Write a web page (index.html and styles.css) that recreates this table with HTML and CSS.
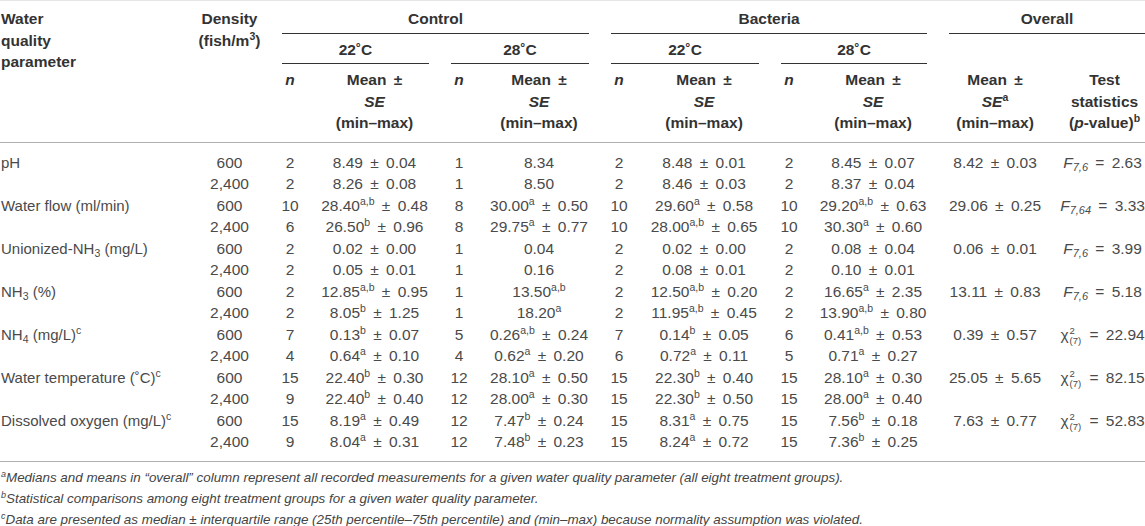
FILE: index.html
```html
<!DOCTYPE html>
<html lang="en">
<head>
<meta charset="utf-8">
<title>Water quality parameters</title>
<link rel="stylesheet" href="styles.css">
</head>
<body>
<table class="tbl">
  <colgroup>
    <col class="c-param"><col class="c-dens">
    <col class="c-n"><col class="c-m1">
    <col class="c-n"><col class="c-m2">
    <col class="c-n"><col class="c-m3">
    <col class="c-n"><col class="c-m4">
    <col class="c-om"><col class="c-test">
  </colgroup>
  <thead>
    <tr>
      <th rowspan="3" class="h-param">Water<br>quality<br>parameter</th>
      <th rowspan="3" class="h-dens">Density<br>(fish/m<sup>3</sup>)</th>
      <th colspan="4" class="grp"><div class="lbl1">Control</div></th>
      <th colspan="4" class="grp"><div class="lbl1">Bacteria</div></th>
      <th colspan="2" class="grp grp-last"><div class="lbl1">Overall</div></th>
    </tr>
    <tr>
      <th colspan="2" class="grp"><div class="lbl2">22˚C</div></th>
      <th colspan="2" class="grp"><div class="lbl2">28˚C</div></th>
      <th colspan="2" class="grp"><div class="lbl2">22˚C</div></th>
      <th colspan="2" class="grp"><div class="lbl2">28˚C</div></th>
      <th colspan="2" class="empty"></th>
    </tr>
    <tr>
      <th class="h3"><i>n</i></th><th class="h3">Mean ±<br><i>SE</i><br>(min–max)</th>
      <th class="h3"><i>n</i></th><th class="h3">Mean ±<br><i>SE</i><br>(min–max)</th>
      <th class="h3"><i>n</i></th><th class="h3">Mean ±<br><i>SE</i><br>(min–max)</th>
      <th class="h3"><i>n</i></th><th class="h3">Mean ±<br><i>SE</i><br>(min–max)</th>
      <th class="h3">Mean ±<br><i>SE</i><sup>a</sup><br>(min–max)</th>
      <th class="h3 test">Test<br>statistics<br>(<i>p</i>-value)<sup>b</sup></th>
    </tr>
  </thead>
  <tbody>
    <tr><td class="param">pH</td><td>600</td><td>2</td><td>8.49 ± 0.04</td><td>1</td><td>8.34</td><td>2</td><td>8.48 ± 0.01</td><td>2</td><td>8.45 ± 0.07</td><td>8.42 ± 0.03</td><td class="test"><i>F</i><sub class="fs">7,6</sub> = 2.63</td></tr>
    <tr><td class="param"></td><td>2,400</td><td>2</td><td>8.26 ± 0.08</td><td>1</td><td>8.50</td><td>2</td><td>8.46 ± 0.03</td><td>2</td><td>8.37 ± 0.04</td><td></td><td class="test"></td></tr>
    <tr><td class="param">Water flow (ml/min)</td><td>600</td><td>10</td><td>28.40<sup>a,b</sup> ± 0.48</td><td>8</td><td>30.00<sup>a</sup> ± 0.50</td><td>10</td><td>29.60<sup>a</sup> ± 0.58</td><td>10</td><td>29.20<sup>a,b</sup> ± 0.63</td><td>29.06 ± 0.25</td><td class="test"><i>F</i><sub class="fs">7,64</sub> = 3.33</td></tr>
    <tr><td class="param"></td><td>2,400</td><td>6</td><td>26.50<sup>b</sup> ± 0.96</td><td>8</td><td>29.75<sup>a</sup> ± 0.77</td><td>10</td><td>28.00<sup>a,b</sup> ± 0.65</td><td>10</td><td>30.30<sup>a</sup> ± 0.60</td><td></td><td class="test"></td></tr>
    <tr><td class="param">Unionized-NH<sub>3</sub> (mg/L)</td><td>600</td><td>2</td><td>0.02 ± 0.00</td><td>1</td><td>0.04</td><td>2</td><td>0.02 ± 0.00</td><td>2</td><td>0.08 ± 0.04</td><td>0.06 ± 0.01</td><td class="test"><i>F</i><sub class="fs">7,6</sub> = 3.99</td></tr>
    <tr><td class="param"></td><td>2,400</td><td>2</td><td>0.05 ± 0.01</td><td>1</td><td>0.16</td><td>2</td><td>0.08 ± 0.01</td><td>2</td><td>0.10 ± 0.01</td><td></td><td class="test"></td></tr>
    <tr><td class="param">NH<sub>3</sub> (%)</td><td>600</td><td>2</td><td>12.85<sup>a,b</sup> ± 0.95</td><td>1</td><td>13.50<sup>a,b</sup></td><td>2</td><td>12.50<sup>a,b</sup> ± 0.20</td><td>2</td><td>16.65<sup>a</sup> ± 2.35</td><td>13.11 ± 0.83</td><td class="test"><i>F</i><sub class="fs">7,6</sub> = 5.18</td></tr>
    <tr><td class="param"></td><td>2,400</td><td>2</td><td>8.05<sup>b</sup> ± 1.25</td><td>1</td><td>18.20<sup>a</sup></td><td>2</td><td>11.95<sup>a,b</sup> ± 0.45</td><td>2</td><td>13.90<sup>a,b</sup> ± 0.80</td><td></td><td class="test"></td></tr>
    <tr><td class="param">NH<sub>4</sub> (mg/L)<sup>c</sup></td><td>600</td><td>7</td><td>0.13<sup>b</sup> ± 0.07</td><td>5</td><td>0.26<sup>a,b</sup> ± 0.24</td><td>7</td><td>0.14<sup>b</sup> ± 0.05</td><td>6</td><td>0.41<sup>a,b</sup> ± 0.53</td><td>0.39 ± 0.57</td><td class="test">χ<sup class="up">2</sup><sub class="dn">(7)</sub> = 22.94</td></tr>
    <tr><td class="param"></td><td>2,400</td><td>4</td><td>0.64<sup>a</sup> ± 0.10</td><td>4</td><td>0.62<sup>a</sup> ± 0.20</td><td>6</td><td>0.72<sup>a</sup> ± 0.11</td><td>5</td><td>0.71<sup>a</sup> ± 0.27</td><td></td><td class="test"></td></tr>
    <tr><td class="param">Water temperature (˚C)<sup>c</sup></td><td>600</td><td>15</td><td>22.40<sup>b</sup> ± 0.30</td><td>12</td><td>28.10<sup>a</sup> ± 0.50</td><td>15</td><td>22.30<sup>b</sup> ± 0.40</td><td>15</td><td>28.10<sup>a</sup> ± 0.30</td><td>25.05 ± 5.65</td><td class="test">χ<sup class="up">2</sup><sub class="dn">(7)</sub> = 82.15</td></tr>
    <tr><td class="param"></td><td>2,400</td><td>9</td><td>22.40<sup>b</sup> ± 0.40</td><td>12</td><td>28.00<sup>a</sup> ± 0.30</td><td>15</td><td>22.30<sup>b</sup> ± 0.50</td><td>15</td><td>28.00<sup>a</sup> ± 0.40</td><td></td><td class="test"></td></tr>
    <tr><td class="param">Dissolved oxygen (mg/L)<sup>c</sup></td><td>600</td><td>15</td><td>8.19<sup>a</sup> ± 0.49</td><td>12</td><td>7.47<sup>b</sup> ± 0.24</td><td>15</td><td>8.31<sup>a</sup> ± 0.75</td><td>15</td><td>7.56<sup>b</sup> ± 0.18</td><td>7.63 ± 0.77</td><td class="test">χ<sup class="up">2</sup><sub class="dn">(7)</sub> = 52.83</td></tr>
    <tr><td class="param"></td><td>2,400</td><td>9</td><td>8.04<sup>a</sup> ± 0.31</td><td>12</td><td>7.48<sup>b</sup> ± 0.23</td><td>15</td><td>8.24<sup>a</sup> ± 0.72</td><td>15</td><td>7.36<sup>b</sup> ± 0.25</td><td></td><td class="test"></td></tr>
  </tbody>
</table>
<div class="notes">
  <p><sup>a</sup>Medians and means in “overall” column represent all recorded measurements for a given water quality parameter (all eight treatment groups).</p>
  <p><sup>b</sup>Statistical comparisons among eight treatment groups for a given water quality parameter.</p>
  <p><sup>c</sup>Data are presented as median ± interquartile range (25th percentile–75th percentile) and (min–max) because normality assumption was violated.</p>
</div>
</body>
</html>
```
FILE: styles.css
```css
html, body {
  margin: 0;
  padding: 0;
  background: #fff;
}
body {
  font-family: "Liberation Sans", Arial, sans-serif;
  font-size: 15px;
  color: #4a4a4a;
  width: 1145px;
}
.tbl {
  width: 1145px;
  border-collapse: collapse;
  table-layout: fixed;
  border-top: 1px solid #e6e6e6;
}
.c-param { width: 188px; }
.c-dens { width: 83px; }
.c-n { width: 38px; }
.c-m1 { width: 131px; }
.c-m2 { width: 122px; }
.c-m3 { width: 132px; }
.c-m4 { width: 130px; }
.c-om { width: 114px; }
.c-test { width: 93px; }

sup {
  font-size: 10.5px;
  line-height: 0;
  vertical-align: 6px;
}
sub {
  font-size: 10.5px;
  line-height: 0;
  vertical-align: -3px;
}
.tbl th {
  font-weight: bold;
  font-size: 15.5px;
  color: #333;
  padding: 0;
  line-height: 21.5px;
  vertical-align: top;
  text-align: center;
  word-spacing: 3px;
}
.tbl th.h-param {
  text-align: left;
  padding: 7px 0 0 1px;
  word-spacing: 0;
}
.tbl th.h-dens {
  padding-top: 7px;
}
.tbl th.grp {
  padding: 0 11px;
}
.tbl th.grp-last {
  padding: 0 0 0 11px;
}
.lbl1 {
  padding: 7px 0 3.5px;
  border-bottom: 1px solid #333;
}
.lbl2 {
  padding: 4.5px 0 3px;
  border-bottom: 1px solid #333;
}
.tbl th.h3 {
  padding: 5px 0 8px;
}
.tbl thead {
  border-bottom: 1px solid #b0b0b0;
}
.tbl tbody {
  border-bottom: 1px solid #b0b0b0;
}
.tbl td {
  padding: 0;
  font-size: 15.5px;
  line-height: 21.5px;
  text-align: center;
  white-space: nowrap;
  word-spacing: 3px;
}
.tbl td.param {
  text-align: left;
  padding-left: 1px;
  font-size: 15px;
  word-spacing: 0;
}
.tbl th.test {
  padding-left: 12px;
}
.tbl td.test {
  padding-left: 8px;
  word-spacing: 3px;
}
.tbl tbody tr:first-child td {
  padding-top: 9px;
}
.tbl tbody tr:last-child td {
  padding-bottom: 8.5px;
}
.fs {
  font-style: italic;
  font-size: 11px;
}
sup.up {
  display: inline-block;
  width: 0;
  font-size: 9.5px;
  vertical-align: 6px;
  margin-left: 1px;
}
sub.dn {
  font-size: 9.5px;
  vertical-align: -4px;
  margin-right: 1px;
}
.notes {
  padding: 5px 0 0 1px;
  font-style: italic;
  font-size: 13.4px;
  line-height: 21px;
  color: #444;
}
.notes p {
  margin: 0;
}
.notes sup {
  font-size: 9px;
  vertical-align: 5px;
}
```
